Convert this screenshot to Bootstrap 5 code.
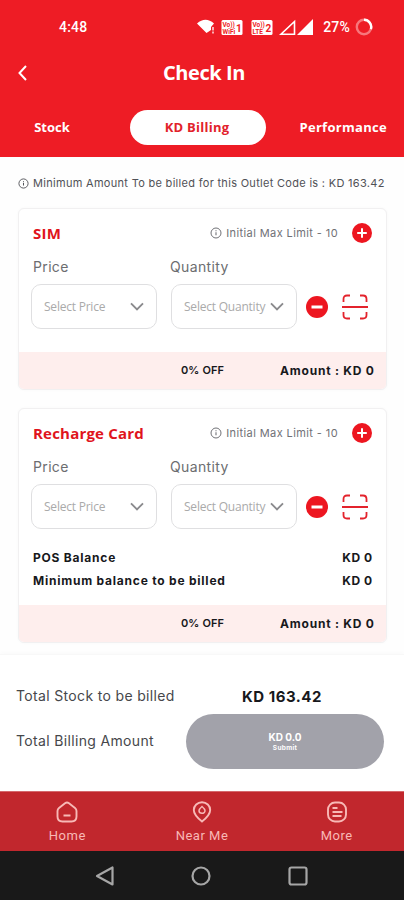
<!DOCTYPE html>
<html lang="en">
<head>
<meta charset="utf-8">
<meta name="viewport" content="width=device-width, initial-scale=1">
<title>Check In</title>
<link rel="stylesheet" href="https://cdn.jsdelivr.net/npm/bootstrap@5.3.0/dist/css/bootstrap.min.css">
<style>
body{width:404px;height:900px;overflow:hidden;font-family:Inter,Roboto,"Liberation Sans",sans-serif;background:#fefefe;color:#17181c;line-height:1}
svg{display:block;flex:none}
span,h1,h2,a{white-space:nowrap}
.top-area{height:157px;background:#ee1c25;color:#fff}
.status-row{height:53px;padding:1px 31px 0 59px}
.clock,.pct{font-family:Roboto,sans-serif;font-size:14px;font-weight:500;letter-spacing:.2px}
.pct{margin:0 5px 0 9px}
.title-row{height:40px;padding:0 16px}
.page-title{font:700 20px/1 "Open Sans",sans-serif;letter-spacing:-.4px}
.tab-row{height:64px;padding-top:4px}
.tab-link{font:700 13px/35px "Open Sans",sans-serif;color:#fff;text-decoration:none;text-align:center}
.tab-first{width:104px}
.tab-on{width:136px;height:35px;border-radius:18px;background:#fff;color:#e2222b;margin-left:26px;padding-right:2px;letter-spacing:.25px}
.tab-last{margin-right:17px;letter-spacing:.3px}
.notice{height:51px;padding:2px 0 0 18px;font-size:11px;color:#505156}
.notice span{letter-spacing:.3px;margin-left:4px}
.panel{width:369px;margin-left:18px;border:1px solid #f1f0f1;border-radius:6px;background:#fff;overflow:hidden;box-shadow:0 0 3px rgba(0,0,0,.03)}
.second{margin-top:18px}
.panel-head{height:48px;padding:0 14px;color:#707176}
.panel-title{font:700 15px/1 "Open Sans",sans-serif;color:#e0141c;margin:0;letter-spacing:.2px}
.limit{font-size:11px;letter-spacing:.4px;margin:0 14px 0 4px}
.labels{height:20px;padding-left:14px;font-size:14px;color:#6c6d70;letter-spacing:.35px}
.labels span:first-child{width:137px}
.fields{height:45px;margin-top:7px;padding-left:12px}
.pick{width:126px;height:45px;border:1px solid #dfdfe1;border-radius:10px;padding:0 12px;font:400 12px/1 "Open Sans",sans-serif;color:#aaa;letter-spacing:-.22px}
.pick.q{margin-left:14px}
.less{margin-left:9px}
.scan{margin-left:14px}
.band{height:37px;background:#feeeed;padding:0 12px 0 162px}
.gap-row{margin-top:23px}
.balances{padding:17px 14px 13px}
.bal{height:23px}
.strong-text{font-size:12px;font-weight:700;letter-spacing:.78px;margin-right:-.7px}
.strong-text.off{font-size:11px;font-weight:600;letter-spacing:.1px}
.strong-text.kd{letter-spacing:.5px;margin-right:-.5px}
.totals{height:137px;background:#fff;border-top:1px solid #f8f8f8;box-shadow:0 -2px 4px rgba(0,0,0,.015);margin-top:11px;padding:14px 20px 0 16px}
.total-label{font-size:14px;color:#46474b;letter-spacing:.34px;padding-bottom:1px}
.sum-row{height:45px;padding-top:9px}
.stock-sum{font-size:15px;font-weight:700;width:142px;letter-spacing:.5px}
.submit{width:198px;height:55px;border-radius:28px;background:#a2a2aa;color:#fff;border:0;padding:0}
.sub-kd{font-size:10px;font-weight:700}
.sub-txt{font-size:6.5px;font-weight:700;margin-top:3px;letter-spacing:.3px}
.app-nav{height:60px;background:#c1272d;border-top:1px solid #d5686c;color:#f8b9b6}
.app-nav a{color:inherit;text-decoration:none;font:400 13px/1 Roboto,sans-serif;letter-spacing:.5px;width:135px;gap:6px;padding-top:9px}
.sys-nav{height:50px;background:#191919}
</style>
<script src="https://cdn.jsdelivr.net/npm/bootstrap@5.3.0/dist/js/bootstrap.bundle.min.js"></script>
</head>
<body>
<svg width="0" height="0" class="position-absolute" aria-hidden="true">
<defs>
<symbol id="info" viewBox="0 0 12 12"><circle cx="6" cy="6" r="5" fill="none" stroke="currentColor"/><path d="M6 5.3v3M6 3.2v1" stroke="currentColor" stroke-width="1.1"/></symbol>
<symbol id="plus" viewBox="0 0 20 20"><circle cx="10" cy="10" r="10" fill="#ed1620"/><path d="M10 5.200v9.600M5.200 10h9.600" stroke="#fff" stroke-width="2"/></symbol>
<symbol id="minus" viewBox="0 0 22 22"><circle cx="11" cy="11" r="11" fill="#ed1620"/><path d="M5.500 11h11" stroke="#fff" stroke-width="3"/></symbol>
<symbol id="scan" viewBox="0 0 26 26"><path d="M1.500 8V5q0-3.500 3.500-3.500H8M18 1.500h3q3.500 0 3.500 3.500v3M1.500 18v3q0 3.500 3.500 3.500h3M18 24.500h3q3.500 0 3.500-3.500v-3M0 13h26" fill="none" stroke="#e3232c" stroke-width="1.800"/></symbol>
<symbol id="chev" viewBox="0 0 14 9"><path d="M1 1.300l6 6 6-6" fill="none" stroke="#8a8a8d" stroke-width="1.900"/></symbol>
</defs>
</svg>

<header class="top-area">
  <div class="status-row d-flex align-items-center">
    <span class="clock me-auto">4:48</span>
    <svg width="118" height="18" viewBox="0 0 118 18">
      <path d="M1 5.500q8.500-7.500 17 0l-3 3.500v3l-4.500 3z" fill="#fff"/><path d="M17 9v3.500M17 13.500v2" stroke="#fff" stroke-width="1.300"/>
      <g font-family="Roboto,sans-serif" font-weight="700" fill="#ee1c25">
      <rect x="25.500" y="2" width="21" height="15" rx="1.500" fill="#fff"/><text x="26.500" y="8.500" font-size="6.500">Vo))</text><text x="26.500" y="15.500" font-size="6.500">WiFi</text><text x="40" y="13.500" font-size="10">1</text>
      <rect x="55.500" y="2" width="21" height="15" rx="1.500" fill="#fff"/><text x="56.500" y="8.500" font-size="6.500">Vo))</text><text x="56.500" y="15.500" font-size="6.500">LTE</text><text x="69.500" y="13.500" font-size="10">2</text>
      </g>
      <path d="M85 16.200H98.500V3.500z" fill="none" stroke="#fff" stroke-width="1.600"/><path d="M101 17h16V1z" fill="#fff"/>
    </svg>
    <span class="pct">27%</span>
    <svg width="18" height="18" viewBox="0 0 18 18" fill="none" stroke-width="2.400"><circle cx="9" cy="9" r="7.200" stroke="#f7777c"/><path d="M9 1.800a7.200 7.200 0 0 1 6.900 9.300" stroke="#fff"/></svg>
  </div>
  <div class="title-row d-flex align-items-center">
    <svg width="12" height="16" viewBox="0 0 12 16"><path d="M10 1L3.500 8l6.500 7" fill="none" stroke="#fff" stroke-width="2"/></svg>
    <h1 class="page-title flex-fill text-center m-0 pe-2">Check In</h1>
  </div>
  <nav class="tab-row d-flex align-items-center">
    <a class="tab-link tab-first" href="#">Stock</a>
    <a class="tab-link tab-on" href="#">KD Billing</a>
    <a class="tab-link tab-last ms-auto" href="#">Performance</a>
  </nav>
</header>

<main>
  <div class="notice d-flex align-items-center"><svg width="11" height="11"><use href="#info"/></svg><span>Minimum Amount To be billed for this Outlet Code is : KD 163.42</span></div>

  <section class="panel">
    <div class="panel-head d-flex align-items-center">
      <h2 class="panel-title me-auto">SIM</h2><svg width="12" height="12"><use href="#info"/></svg><span class="limit">Initial Max Limit - 10</span><svg width="20" height="20"><use href="#plus"/></svg>
    </div>
    <div class="labels d-flex align-items-center"><span>Price</span><span>Quantity</span></div>
    <div class="fields d-flex align-items-center">
      <div class="pick d-flex align-items-center justify-content-between"><span>Select Price</span><svg width="14" height="9"><use href="#chev"/></svg></div>
      <div class="pick q d-flex align-items-center justify-content-between"><span>Select Quantity</span><svg width="14" height="9"><use href="#chev"/></svg></div>
      <svg class="less" width="22" height="22"><use href="#minus"/></svg>
      <svg class="scan" width="26" height="26"><use href="#scan"/></svg>
    </div>
    <div class="band gap-row d-flex align-items-center justify-content-between"><span class="strong-text off">0% OFF</span><span class="strong-text">Amount : KD 0</span></div>
  </section>

  <section class="panel second">
    <div class="panel-head d-flex align-items-center">
      <h2 class="panel-title me-auto">Recharge Card</h2><svg width="12" height="12"><use href="#info"/></svg><span class="limit">Initial Max Limit - 10</span><svg width="20" height="20"><use href="#plus"/></svg>
    </div>
    <div class="labels d-flex align-items-center"><span>Price</span><span>Quantity</span></div>
    <div class="fields d-flex align-items-center">
      <div class="pick d-flex align-items-center justify-content-between"><span>Select Price</span><svg width="14" height="9"><use href="#chev"/></svg></div>
      <div class="pick q d-flex align-items-center justify-content-between"><span>Select Quantity</span><svg width="14" height="9"><use href="#chev"/></svg></div>
      <svg class="less" width="22" height="22"><use href="#minus"/></svg>
      <svg class="scan" width="26" height="26"><use href="#scan"/></svg>
    </div>
    <div class="balances">
      <div class="bal d-flex align-items-center justify-content-between"><span class="strong-text">POS Balance</span><span class="strong-text kd">KD 0</span></div>
      <div class="bal d-flex align-items-center justify-content-between"><span class="strong-text">Minimum balance to be billed</span><span class="strong-text kd">KD 0</span></div>
    </div>
    <div class="band d-flex align-items-center justify-content-between"><span class="strong-text off">0% OFF</span><span class="strong-text">Amount : KD 0</span></div>
  </section>

  <section class="totals">
    <div class="sum-row d-flex align-items-center"><span class="total-label me-auto">Total Stock to be billed</span><span class="stock-sum">KD 163.42</span></div>
    <div class="d-flex align-items-center justify-content-between"><span class="total-label">Total Billing Amount</span>
      <button class="submit d-flex flex-column align-items-center justify-content-center"><span class="sub-kd">KD 0.0</span><span class="sub-txt">Submit</span></button></div>
  </section>
</main>

<nav class="app-nav d-flex">
  <a href="#" class="d-flex flex-column align-items-center"><svg width="22" height="22" viewBox="0 0 22 22" fill="none" stroke="currentColor" stroke-width="1.900"><path d="M9 2.300Q11 .800 13 2.300l6 4.700q1.500 1.200 1.500 3V15.500q0 5-5 5h-9q-5 0-5-5V10q0-1.800 1.500-3zM7.500 14.500h7"/></svg><span>Home</span></a>
  <a href="#" class="d-flex flex-column align-items-center"><svg width="22" height="22" viewBox="0 0 22 22" fill="none" stroke="currentColor" stroke-width="1.900"><path d="M11 20.500Q2.800 14 2.800 9a8.200 7.800 0 0 1 16.400 0Q19.200 14 11 20.500z"/><path d="M11 5.500q3 2.500 3 4.300a3 2.500 0 0 1-6 0Q8 8 11 5.500z" stroke-width="1.500"/></svg><span>Near Me</span></a>
  <a href="#" class="d-flex flex-column align-items-center"><svg width="22" height="22" viewBox="0 0 22 22" fill="none" stroke="currentColor" stroke-width="1.900"><rect x="2" y="1.500" width="18" height="19" rx="7"/><path d="M6.500 7h5M6.500 11h10M6.500 15h9"/></svg><span>More</span></a>
</nav>
<footer class="sys-nav d-flex align-items-center">
  <svg width="404" height="49" viewBox="0 0 404 49" fill="none" stroke="#a6a6a6" stroke-width="2.200" stroke-linejoin="round"><path d="M97 24L112.500 15.500v17z"/><circle cx="201" cy="24" r="8.500"/><rect x="289.500" y="15.500" width="17" height="17" rx="2"/></svg>
</footer>
</body>
</html>
